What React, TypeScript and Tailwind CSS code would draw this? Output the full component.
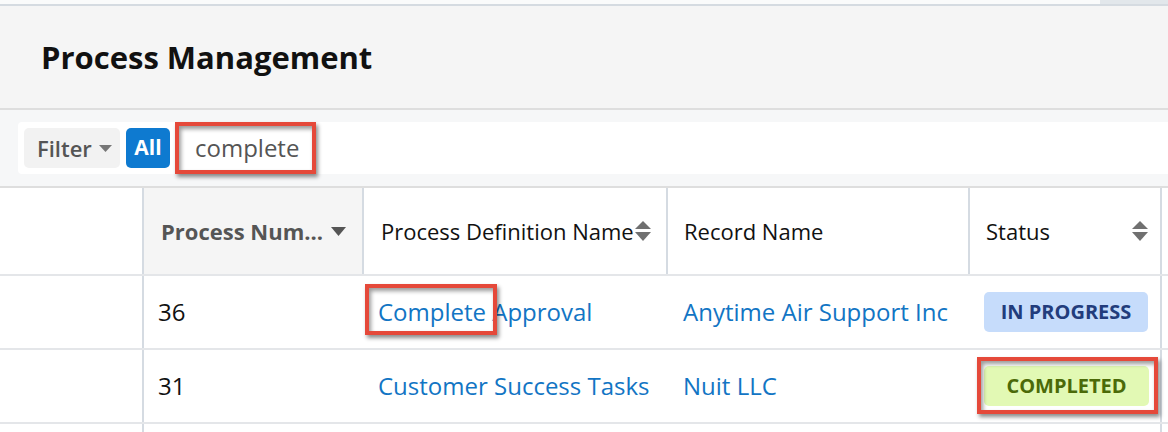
import React from "react";

const SortBoth = ({ className = "" }: { className?: string }) => (
  <svg width="16" height="20" viewBox="0 0 16 20" className={className}>
    <path d="M8 0 L16 8 L0 8 Z" fill="#707070" />
    <path d="M0 11 L16 11 L8 20 Z" fill="#707070" />
  </svg>
);

const CaretDown = ({ w = 15, h = 9, color = "#555" }: { w?: number; h?: number; color?: string }) => (
  <svg width={w} height={h} viewBox={`0 0 ${w} ${h}`}>
    <path d={`M0 0 L${w} 0 L${w / 2} ${h} Z`} fill={color} />
  </svg>
);

const Annot = ({ className }: { className: string }) => (
  <div
    className={`absolute border-[4px] border-[#e5493a] shadow-[2px_3px_4px_rgba(0,0,0,0.45),inset_2px_3px_4px_rgba(0,0,0,0.4)] pointer-events-none ${className}`}
  />
);

export default function App() {
  return (
    <div
      className="relative w-[1168px] h-[432px] overflow-hidden bg-white"
      style={{ fontFamily: '"Open Sans", "Noto Sans", sans-serif' }}
    >
      {/* top strip */}
      <div className="flex h-[4px]">
        <div className="flex-1 bg-[#fafbfb]" />
        <div className="w-[68px] bg-[#e2e7eb]" />
      </div>
      <div className="h-[2px] bg-[#d5dbe1]" />

      {/* page header */}
      <div className="h-[102px] bg-[#f5f5f5] flex items-center pl-[41px]">
        <h1 className="text-[31px] font-bold text-[#111]">Process Management</h1>
      </div>
      <div className="h-[2px] bg-[#dedede]" />

      {/* filter bar */}
      <div className="h-[76px] bg-[#f6f7f8] pt-[12px] pl-[18px]">
        <div className="h-[52px] bg-white rounded-l-[4px] flex items-center pl-[6px] gap-[6px]">
          <div className="h-[40px] w-[96px] rounded-[5px] bg-[#f2f2f2] flex items-center pl-[13px] gap-[7px]">
            <span className="text-[22px] font-semibold text-[#555]">Filter</span>
            <CaretDown w={13} h={7} color="#777" />
          </div>
          <div className="h-[40px] w-[44px] rounded-[5px] bg-[#0e7ad0] flex items-center justify-center">
            <span className="text-[21px] font-bold text-white">All</span>
          </div>
          <span className="ml-[19px] text-[24px] text-[#555]">complete</span>
        </div>
      </div>
      <div className="h-[2px] bg-[#dedede]" />

      {/* table header */}
      <div className="flex h-[88px] border-b-2 border-[#e4e6e9]">
        <div className="w-[142px] bg-white" />
        <div className="w-[220px] border-l-2 border-[#d5dbe2] bg-[#f5f5f5] flex items-center pl-[17px] gap-[8px]">
          <span className="text-[22px] font-bold text-[#555]">Process Num...</span>
          <CaretDown />
        </div>
        <div className="w-[304px] border-l-2 border-[#d5dbe2] flex items-center pl-[17px]">
          <span className="text-[22px] text-[#111]">Process Definition Name</span>
          <SortBoth className="ml-[1px]" />
        </div>
        <div className="w-[302px] border-l-2 border-[#d5dbe2] flex items-center pl-[16px]">
          <span className="text-[22px] text-[#111]">Record Name</span>
        </div>
        <div className="w-[192px] border-l-2 border-[#d5dbe2] flex items-center justify-between pl-[16px] pr-[12px]">
          <span className="text-[22px] text-[#111]">Status</span>
          <SortBoth />
        </div>
        <div className="flex-1 border-l-2 border-[#d5dbe2]" />
      </div>

      {/* rows */}
      {[
        { n: "36", def: "Complete Approval", rec: "Anytime Air Support Inc", status: "IN PROGRESS" },
        { n: "31", def: "Customer Success Tasks", rec: "Nuit LLC", status: "COMPLETED" },
      ].map((r) => (
        <div key={r.n} className="flex h-[74px] border-b-2 border-[#e4e6e9]">
          <div className="w-[142px]" />
          <div className="w-[220px] border-l-2 border-[#d5dbe2] flex items-center pl-[14px] pb-[1px]">
            <span className="text-[24px] text-[#111]">{r.n}</span>
          </div>
          <div className="w-[304px] pl-[16px] flex items-center pb-[1px]">
            <span className="text-[24px] text-[#1275c4]">{r.def}</span>
          </div>
          <div className="w-[302px] pl-[17px] flex items-center pb-[1px]">
            <span className="text-[24px] text-[#1275c4]">{r.rec}</span>
          </div>
          <div className="w-[192px] pl-[16px] flex items-center">
            {r.status === "IN PROGRESS" ? (
              <div className="w-[164px] h-[40px] rounded-[5px] bg-[#c6dcfb] flex items-center justify-center">
                <span className="text-[20px] font-bold text-[#223c7c]">IN PROGRESS</span>
              </div>
            ) : (
              <div className="w-[165px] h-[40px] rounded-[5px] bg-[#e2f9b4] flex items-center justify-center">
                <span className="text-[20px] font-bold text-[#4b6a08]">COMPLETED</span>
              </div>
            )}
          </div>
          <div className="flex-1 border-l-2 border-[#d5dbe2]" />
        </div>
      ))}
      <div className="flex h-[10px]">
        <div className="w-[142px]" />
        <div className="w-[220px] border-l-2 border-[#d5dbe2]" />
        <div className="w-[606px]" />
        <div className="w-[192px]" />
        <div className="flex-1 border-l-2 border-[#d5dbe2]" />
      </div>

      {/* annotations */}
      <Annot className="left-[175px] top-[122px] w-[141px] h-[52px]" />
      <Annot className="left-[365px] top-[284px] w-[132px] h-[51px]" />
      <Annot className="left-[977px] top-[357px] w-[181px] h-[57px]" />
    </div>
  );
}
